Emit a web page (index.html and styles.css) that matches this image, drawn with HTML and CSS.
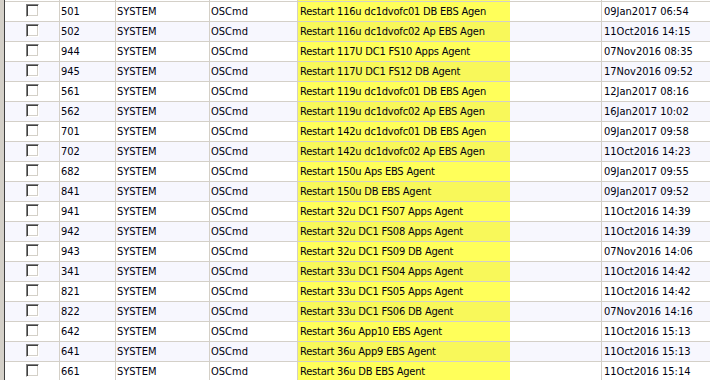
FILE: index.html
```html
<!DOCTYPE html>
<html>
<head>
<meta charset="utf-8">
<link rel="stylesheet" href="styles.css">
</head>
<body>
<div class="frame">
  <div class="grid">
    <div class="row dummy"><div class="c chk"></div><div class="c"></div><div class="c"></div><div class="c"></div><div class="c desc"><span class="hl"></span></div><div class="c"></div></div>
    <div class="row"><div class="c chk"><span class="box"></span></div><div class="c num">501</div><div class="c">SYSTEM</div><div class="c">OSCmd</div><div class="c desc"><span class="hl">Restart 116u dc1dvofc01 DB EBS Agen</span></div><div class="c date">09Jan2017 06:54</div></div>
    <div class="row alt"><div class="c chk"><span class="box"></span></div><div class="c num">502</div><div class="c">SYSTEM</div><div class="c">OSCmd</div><div class="c desc"><span class="hl">Restart 116u dc1dvofc02 Ap EBS Agen</span></div><div class="c date">11Oct2016 14:15</div></div>
    <div class="row"><div class="c chk"><span class="box"></span></div><div class="c num">944</div><div class="c">SYSTEM</div><div class="c">OSCmd</div><div class="c desc"><span class="hl">Restart 117U DC1 FS10 Apps Agent</span></div><div class="c date">07Nov2016 08:35</div></div>
    <div class="row alt"><div class="c chk"><span class="box"></span></div><div class="c num">945</div><div class="c">SYSTEM</div><div class="c">OSCmd</div><div class="c desc"><span class="hl">Restart 117U DC1 FS12 DB Agent</span></div><div class="c date">17Nov2016 09:52</div></div>
    <div class="row"><div class="c chk"><span class="box"></span></div><div class="c num">561</div><div class="c">SYSTEM</div><div class="c">OSCmd</div><div class="c desc"><span class="hl">Restart 119u dc1dvofc01 DB EBS Agen</span></div><div class="c date">12Jan2017 08:16</div></div>
    <div class="row alt"><div class="c chk"><span class="box"></span></div><div class="c num">562</div><div class="c">SYSTEM</div><div class="c">OSCmd</div><div class="c desc"><span class="hl">Restart 119u dc1dvofc02 Ap EBS Agen</span></div><div class="c date">16Jan2017 10:02</div></div>
    <div class="row"><div class="c chk"><span class="box"></span></div><div class="c num">701</div><div class="c">SYSTEM</div><div class="c">OSCmd</div><div class="c desc"><span class="hl">Restart 142u dc1dvofc01 DB EBS Agen</span></div><div class="c date">09Jan2017 09:58</div></div>
    <div class="row alt"><div class="c chk"><span class="box"></span></div><div class="c num">702</div><div class="c">SYSTEM</div><div class="c">OSCmd</div><div class="c desc"><span class="hl">Restart 142u dc1dvofc02 Ap EBS Agen</span></div><div class="c date">11Oct2016 14:23</div></div>
    <div class="row"><div class="c chk"><span class="box"></span></div><div class="c num">682</div><div class="c">SYSTEM</div><div class="c">OSCmd</div><div class="c desc"><span class="hl">Restart 150u Aps EBS Agent</span></div><div class="c date">09Jan2017 09:55</div></div>
    <div class="row alt"><div class="c chk"><span class="box"></span></div><div class="c num">841</div><div class="c">SYSTEM</div><div class="c">OSCmd</div><div class="c desc"><span class="hl">Restart 150u DB EBS Agent</span></div><div class="c date">09Jan2017 09:52</div></div>
    <div class="row"><div class="c chk"><span class="box"></span></div><div class="c num">941</div><div class="c">SYSTEM</div><div class="c">OSCmd</div><div class="c desc"><span class="hl">Restart 32u DC1 FS07 Apps Agent</span></div><div class="c date">11Oct2016 14:39</div></div>
    <div class="row alt"><div class="c chk"><span class="box"></span></div><div class="c num">942</div><div class="c">SYSTEM</div><div class="c">OSCmd</div><div class="c desc"><span class="hl">Restart 32u DC1 FS08 Apps Agent</span></div><div class="c date">11Oct2016 14:39</div></div>
    <div class="row"><div class="c chk"><span class="box"></span></div><div class="c num">943</div><div class="c">SYSTEM</div><div class="c">OSCmd</div><div class="c desc"><span class="hl">Restart 32u DC1 FS09 DB Agent</span></div><div class="c date">07Nov2016 14:06</div></div>
    <div class="row alt"><div class="c chk"><span class="box"></span></div><div class="c num">341</div><div class="c">SYSTEM</div><div class="c">OSCmd</div><div class="c desc"><span class="hl">Restart 33u DC1 FS04 Apps Agent</span></div><div class="c date">11Oct2016 14:42</div></div>
    <div class="row"><div class="c chk"><span class="box"></span></div><div class="c num">821</div><div class="c">SYSTEM</div><div class="c">OSCmd</div><div class="c desc"><span class="hl">Restart 33u DC1 FS05 Apps Agent</span></div><div class="c date">11Oct2016 14:42</div></div>
    <div class="row alt"><div class="c chk"><span class="box"></span></div><div class="c num">822</div><div class="c">SYSTEM</div><div class="c">OSCmd</div><div class="c desc"><span class="hl">Restart 33u DC1 FS06 DB Agent</span></div><div class="c date">07Nov2016 14:16</div></div>
    <div class="row"><div class="c chk"><span class="box"></span></div><div class="c num">642</div><div class="c">SYSTEM</div><div class="c">OSCmd</div><div class="c desc"><span class="hl">Restart 36u App10 EBS Agent</span></div><div class="c date">11Oct2016 15:13</div></div>
    <div class="row alt"><div class="c chk"><span class="box"></span></div><div class="c num">641</div><div class="c">SYSTEM</div><div class="c">OSCmd</div><div class="c desc"><span class="hl">Restart 36u App9 EBS Agent</span></div><div class="c date">11Oct2016 15:13</div></div>
    <div class="row"><div class="c chk"><span class="box"></span></div><div class="c num">661</div><div class="c">SYSTEM</div><div class="c">OSCmd</div><div class="c desc"><span class="hl">Restart 36u DB EBS Agent</span></div><div class="c date">11Oct2016 15:14</div></div>
  </div>
</div>
</body>
</html>
```

FILE: styles.css
```css
html, body {
  margin: 0;
  padding: 0;
  background: #ffffff;
  overflow: hidden;
}

.frame {
  display: flex;
  width: 710px;
  height: 380px;
  overflow: hidden;
  border-left: 4px solid #d4d0c8;
  box-sizing: border-box;
}

.grid {
  flex: 1;
  border-left: 1px solid #404040;
  font-family: "DejaVu Sans Condensed", "DejaVu Sans", sans-serif;
  font-stretch: condensed;
  font-size: 11px;
  color: #000010;
}

.row {
  display: grid;
  grid-template-columns: 55px 56px 94px 88px 304px 1fr;
  height: 20px;
  box-sizing: border-box;
  border-top: 1px solid #d4d0c8;
  background: #ffffff;
}

.row.dummy {
  margin-top: -19px;
}

.row.alt {
  background: #f7f7fe;
}

.c {
  border-right: 1px solid #d4d0c8;
  line-height: 19px;
  white-space: nowrap;
  overflow: hidden;
  padding-left: 1px;
}

.c:last-child {
  border-right: none;
}

.num {
  padding-left: 1px;
}

.chk {
  display: flex;
  justify-content: center;
  align-items: flex-start;
  padding: 2px 0 0 0;
}

.box {
  width: 13px;
  height: 13px;
  box-sizing: border-box;
  border: 1px solid;
  border-color: #808080 #ffffff #ffffff #808080;
  box-shadow: inset 1px 1px 0 #404040, inset -1px -1px 0 #d4d0c8;
  background: #ffffff;
}

.desc {
  padding-left: 0;
}

.hl {
  display: block;
  width: 212px;
  height: 19px;
  padding-left: 2px;
  box-sizing: border-box;
  background: #ffff5a;
  letter-spacing: -0.2px;
}

.alt .hl {
  background: #f8f85a;
}

.date {
  padding-left: 2px;
}
```
